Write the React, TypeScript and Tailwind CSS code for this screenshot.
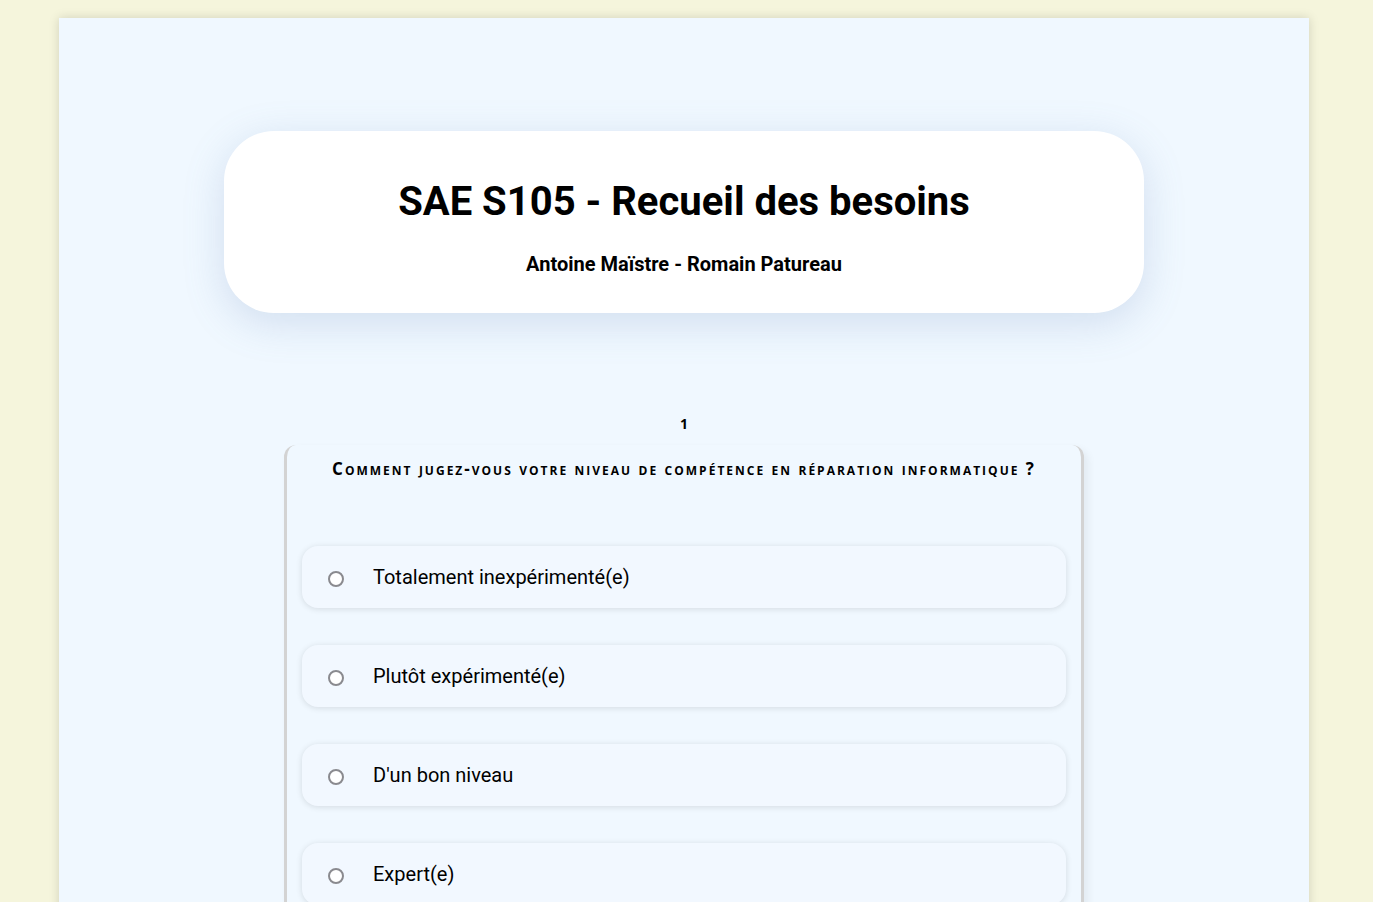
import React from 'react';

const options = [
  'Totalement inexpérimenté(e)',
  'Plutôt expérimenté(e)',
  "D'un bon niveau",
  'Expert(e)',
];

export default function App() {
  return (
    <div className="min-h-screen bg-[#f5f5dc] pt-[18px] font-['Roboto',sans-serif] text-black">
      <main className="ml-[59px] w-[1250px] min-h-[1200px] bg-[#f0f8ff] shadow-[0_0_10px_rgba(0,0,0,0.15)] pt-[113px]">
        {/* Header */}
        <header className="mx-auto w-[920px] h-[182px] rounded-[50px] bg-white shadow-[0_10px_40px_rgba(100,130,180,0.22)] flex flex-col items-center pt-[45px]">
          <h1 className="text-[40px] leading-[52px] font-bold">SAE S105 - Recueil des besoins</h1>
          <p className="mt-[24px] text-[20px] leading-[24px] font-bold">Antoine Maïstre - Romain Patureau</p>
        </header>

        {/* Question 1 */}
        <section className="mt-[102px] flex flex-col items-center">
          <div className="text-[14px] leading-[18px] font-bold font-['Open_Sans',sans-serif]">1</div>
          <div className="mt-[12px] w-[800px] rounded-[12px] border-x-[3px] border-t-0 border-b-0 border-[#d3d3d3] shadow-[4px_4px_8px_rgba(0,0,0,0.06)] px-[15px] pt-[12px] pb-[20px]">
            <h2 className="text-center text-[17px] leading-[24px] font-bold font-['Open_Sans',sans-serif] [font-variant:small-caps] tracking-[2px]">
              Comment jugez-vous votre niveau de compétence en réparation informatique ?
            </h2>
            <div className="mt-[65px] flex flex-col gap-[37px]">
              {options.map((o) => (
                <label
                  key={o}
                  className="h-[62px] rounded-[16px] bg-[#f2f8ff] shadow-[0_1px_6px_rgba(0,0,0,0.12)] flex items-center pl-[26px]"
                >
                  <span className="mt-[4px] w-[16px] h-[16px] rounded-full border-2 border-[#8a8a8f] bg-white" />
                  <span className="ml-[29px] text-[20px] leading-[24px]">{o}</span>
                </label>
              ))}
            </div>
          </div>
        </section>
      </main>
    </div>
  );
}
